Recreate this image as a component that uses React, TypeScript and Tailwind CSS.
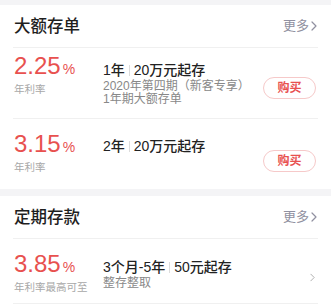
const font = { fontFamily: '"Liberation Sans", "Noto Sans CJK SC", sans-serif' };

function Chevron({ className }: { className: string }) {
  return (
    <svg viewBox="0 0 6 10" className={className} fill="none" stroke="currentColor" strokeWidth="1.2">
      <path d="M1 1l4 4-4 4" strokeLinecap="round" strokeLinejoin="round" />
    </svg>
  );
}

function Header({ title }: { title: string }) {
  return (
    <div className="flex h-[42px] items-center justify-between pl-[14px] pr-[14px]">
      <h2 className="text-[16.5px] font-medium leading-[20px] text-[#1f1f1f]">{title}</h2>
      <div className="flex items-center text-[13px] text-[#9090a0]">
        <span>更多</span>
        <Chevron className="ml-[2px] h-[10px] w-[6px]" />
      </div>
    </div>
  );
}

function Rate({ value, label }: { value: string; label: string }) {
  return (
    <div className="w-[90px] shrink-0 pl-[1px]">
      <div className="flex items-baseline leading-[24px] text-[#e8514f]">
        <span className="text-[24px]">{value}</span>
        <span className="ml-[2px] text-[14px]">%</span>
      </div>
      <div className="mt-[2px] whitespace-nowrap text-[10.5px] leading-[12px] text-[#a8a8a8]">{label}</div>
    </div>
  );
}

function Title({ a, b }: { a: string; b: string }) {
  return (
    <div className="flex items-center text-[14px] font-medium leading-[16px] text-[#222]">
      <span>{a}</span>
      <span className="mx-[4px] h-[11px] w-px bg-[#dcdcdc]" />
      <span>{b}</span>
    </div>
  );
}

function BuyButton({ className = "" }: { className?: string }) {
  return (
    <button
      className={`h-[22px] w-[53px] shrink-0 self-center rounded-full border border-[#f6c9c9] text-[12px] font-bold text-[#e8514f] ${className}`}
    >
      购买
    </button>
  );
}

export default function App() {
  return (
    <div className="h-[304px] w-[331px] overflow-hidden bg-white" style={font}>
      <div className="h-[5px] bg-[#f4f4f6]" />

      <Header title="大额存单" />
      <div className="mx-[13px] h-[71px] border-t border-[#f0f0f0]">
        <div className="flex h-[70px] pt-[6px] pr-[2px]">
          <Rate value="2.25" label="年利率" />
          <div className="mt-[8px] flex-1">
            <Title a="1年" b="20万元起存" />
            <div className="mt-[2px] text-[12px] leading-[13px] text-[#888]">2020年第四期（新客专享）</div>
            <div className="text-[12px] leading-[13px] text-[#888]">1年期大额存单</div>
          </div>
          <BuyButton className="mt-[4px]" />
        </div>
      </div>
      <div className="mx-[13px] h-[71px] border-t border-[#f0f0f0]">
        <div className="flex h-[70px] pt-[13px] pr-[2px]">
          <Rate value="3.15" label="年利率" />
          <div className="mt-[6px] flex-1">
            <Title a="2年" b="20万元起存" />
          </div>
          <BuyButton />
        </div>
      </div>

      <div className="h-[7px] bg-[#f4f4f6]" />

      <Header title="定期存款" />
      <div className="mx-[13px] h-[66px] border-y border-[#f0f0f0]">
        <div className="flex h-[64px] pt-[13px] pr-[2px]">
          <Rate value="3.85" label="年利率最高可至" />
          <div className="mt-[7px] flex-1">
            <Title a="3个月-5年" b="50元起存" />
            <div className="mt-[2px] text-[12px] leading-[13px] text-[#888]">整存整取</div>
          </div>
          <Chevron className="mr-[1px] h-[9px] w-[5px] self-center text-[#b0b0b0]" />
        </div>
      </div>
    </div>
  );
}
